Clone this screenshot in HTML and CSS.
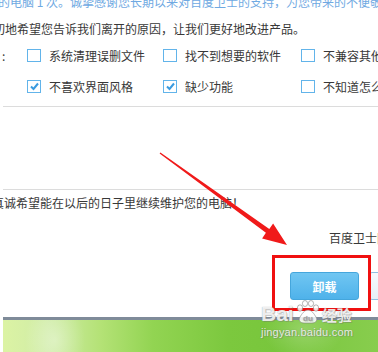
FILE: index.html
```html
<!DOCTYPE html>
<html>
<head>
  <meta charset="utf-8">
  <link rel="stylesheet" href="styles.css">
</head>
<body>
  <div class="page">
    <div class="intro"><span>的电脑 1 次。诚挚感谢您长期以来对百度卫士的支持，为您带来的不便敬请谅解，我们将做得更好</span></div>
    <div class="ask">切地希望您告诉我们离开的原因，让我们更好地改进产品。</div>

    <div class="reasons">
      <span class="colon">:</span>
      <label class="reason"><span class="box"></span>系统清理误删文件</label>
      <label class="reason"><span class="box"></span>找不到想要的软件</label>
      <label class="reason"><span class="box"></span>不兼容其他软件</label>

      <span class="colon"></span>
      <label class="reason"><span class="box checked"><svg width="11" height="11" viewBox="0 0 11 11"><path d="M2 5.5 L4.5 8 L9 2.5" fill="none" stroke="#3a9be0" stroke-width="2"/></svg></span>不喜欢界面风格</label>
      <label class="reason"><span class="box checked"><svg width="11" height="11" viewBox="0 0 11 11"><path d="M2 5.5 L4.5 8 L9 2.5" fill="none" stroke="#3a9be0" stroke-width="2"/></svg></span>缺少功能</label>
      <label class="reason"><span class="box"></span>不知道怎么使用</label>
    </div>

    <div class="rule"></div>
    <div class="spacer"></div>
    <div class="rule"></div>

    <div class="thanks">真诚希望能在以后的日子里继续维护您的电脑！</div>
    <div class="sign">百度卫士团队</div>

    <div class="actions">
      <button class="btn btn-primary">卸载</button>
      <button class="btn btn-plain">取消</button>
    </div>

    <div class="footer"></div>

    <!-- annotations drawn over the screenshot -->
    <svg class="arrow" width="378" height="352" viewBox="0 0 378 352">
      <polygon points="160.4,152.4 269.3,229.1 273.1,223.6 287,245 262.1,238.6 265.9,232.7 159.6,153.6" fill="#f01a1a"/>
    </svg>
    <div class="highlight"></div>

    <div class="watermark">
      <div class="wm-top">
        <span class="wm-bai">Bai</span>
        <svg class="wm-paw" width="26" height="24" viewBox="0 0 26 24">
          <g fill="rgba(255,255,255,0.85)" stroke="rgba(120,120,120,0.55)" stroke-width="1">
            <ellipse cx="5" cy="8" rx="2.6" ry="3.2"/>
            <ellipse cx="10" cy="3.5" rx="2.6" ry="3"/>
            <ellipse cx="16" cy="3.5" rx="2.6" ry="3"/>
            <ellipse cx="21" cy="8" rx="2.6" ry="3.2"/>
            <path d="M13 10 C9 10 7 14 5 17 C3 20 5 23 9 23 L17 23 C21 23 23 20 21 17 C19 14 17 10 13 10 Z"/>
          </g>
          <text x="13" y="21" text-anchor="middle" font-family="Liberation Sans, sans-serif" font-weight="bold" font-size="8" fill="rgba(150,150,150,0.7)">du</text>
        </svg>
        <span class="wm-jy">经验</span>
      </div>
      <div class="wm-url">jingyan.baidu.com</div>
    </div>
  </div>
</body>
</html>
```

FILE: styles.css
```css
body {
  margin: 0;
  padding: 0;
  background-color: #ffffff;
  font-family: "Noto Sans CJK SC", "Liberation Sans", sans-serif;
  font-size: 12px;
  color: #383838;
}

.page {
  position: relative;
  width: 378px;
  height: 352px;
  overflow: hidden;
  white-space: nowrap;
}

.intro {
  height: 8px;
  overflow: hidden;
  color: #6fa9e2;
}

.intro span {
  display: block;
  line-height: 12px;
  margin-top: -4px;
  margin-left: -2px;
}

.ask {
  margin-top: 13px;
  margin-left: -7px;
  line-height: 16px;
}

.reasons {
  display: grid;
  grid-template-columns: 27px 136px 138px auto;
  grid-auto-rows: 31px;
  margin-top: 3px;
}

.colon {
  display: flex;
  align-items: center;
  padding-left: 2px;
}

.reason {
  display: flex;
  align-items: center;
  gap: 8px;
}

.box {
  box-sizing: border-box;
  width: 14px;
  height: 13px;
  border: 1px solid #62b4ea;
  background-color: #ffffff;
  display: flex;
  align-items: center;
  justify-content: center;
}

.rule {
  height: 1px;
  margin-left: 3px;
  background-color: #dcdcdc;
}

.reasons + .rule {
  margin-top: 4px;
}

.spacer {
  height: 82px;
}

.thanks {
  margin-top: 5px;
  margin-left: -8px;
  line-height: 16px;
}

.sign {
  margin-top: 19px;
  padding-left: 329px;
  line-height: 16px;
}

.actions {
  display: flex;
  gap: 10px;
  margin-top: 26px;
  padding-left: 290px;
}

.btn {
  box-sizing: border-box;
  width: 69px;
  height: 28px;
  padding: 0;
  border-radius: 3px;
  font-family: "Noto Sans CJK SC", sans-serif;
  font-size: 12px;
  flex-shrink: 0;
}

.btn-primary {
  border: 1px solid #45a6dc;
  background: linear-gradient(#70c6f2, #4fb2ea);
  color: #ffffff;
  font-weight: bold;
}

.btn-plain {
  border: 1px solid #8fbfe0;
  background: linear-gradient(#f6fafd, #e6eff6);
  color: #333333;
}

.footer {
  margin-top: 17px;
  margin-left: 3px;
  height: 40px;
  border-top: 3px solid #7f8b99;
  background:
    radial-gradient(ellipse 30px 40px at 52px 20px, rgba(255,255,255,0.35), rgba(255,255,255,0)),
    radial-gradient(ellipse 40px 30px at 300px 10px, rgba(255,255,255,0.2), rgba(255,255,255,0)),
    linear-gradient(90deg, #dcf3a4 0%, #cfeca6 12%, #b4e276 26%, #92d452 40%, #7cc83e 60%, #78c63c 75%, #88cd4e 100%);
}

.arrow {
  position: absolute;
  left: 0;
  top: 0;
  pointer-events: none;
}

.highlight {
  position: absolute;
  left: 272px;
  top: 255px;
  width: 99px;
  height: 56px;
  box-sizing: border-box;
  border: 3px solid #f01010;
}

.watermark {
  position: absolute;
  left: 261px;
  top: 299px;
  width: 92px;
  color: rgba(255, 255, 255, 0.85);
  text-shadow: 0 0 1px rgba(90, 90, 90, 0.6), 1px 1px 0 rgba(120, 120, 120, 0.35);
}

.wm-top {
  display: flex;
  align-items: flex-end;
  height: 25px;
}

.wm-bai {
  font-family: "Liberation Sans", sans-serif;
  font-weight: bold;
  font-size: 21px;
  line-height: 21px;
}

.wm-paw {
  margin-left: 1px;
}

.wm-jy {
  font-family: "Noto Sans CJK SC", sans-serif;
  font-weight: bold;
  font-size: 15px;
  line-height: 18px;
  margin-left: 1px;
}

.wm-url {
  margin-top: 2px;
  font-family: "Liberation Sans", sans-serif;
  font-size: 11px;
  line-height: 12px;
  letter-spacing: 0.2px;
}
```
